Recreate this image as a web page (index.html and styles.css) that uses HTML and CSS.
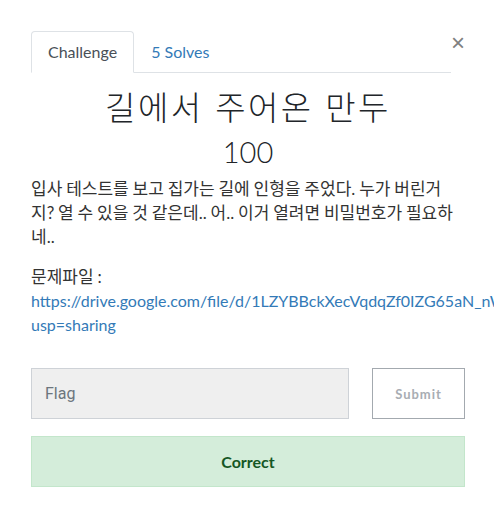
FILE: index.html
```html
<!DOCTYPE html>
<html lang="ko">
<head>
<meta charset="utf-8">
<title>Challenge</title>
<link rel="stylesheet" href="styles.css">
</head>
<body>
<div class="modal">
  <div class="header">
    <ul class="tabs">
      <li class="tab active">Challenge</li>
      <li class="tab"><a href="#">5 Solves</a></li>
    </ul>
    <button class="close" type="button">&times;</button>
  </div>
  <div class="content">
    <h2 class="title">길에서 주어온 만두</h2>
    <h3 class="value">100</h3>
    <div class="desc">
      <p class="ko">입사 테스트를 보고 집가는 길에 인형을 주었다. 누가 버린거<br>지? 열 수 있을 것 같은데.. 어.. 이거 열려면 비밀번호가 필요하<br>네..</p>
      <p><span class="ko">문제파일 :</span><br><a href="#">https://drive.google.com/file/d/1LZYBBckXecVqdqZf0IZG65aN_nWmPz2Q/view?usp=sharing</a></p>
    </div>
    <form class="submit-row">
      <input class="flag" type="text" placeholder="Flag">
      <button class="submit" type="button">Submit</button>
    </form>
    <div class="notice">Correct</div>
  </div>
</div>
</body>
</html>
```

FILE: styles.css
```css
html, body {
  margin: 0;
  padding: 0;
  background: #fff;
  overflow: hidden;
}

body {
  font-family: Lato, "Noto Sans CJK KR", sans-serif;
  color: #212529;
  font-size: 16px;
  line-height: 1.5;
}

.modal {
  width: 494px;
  height: 531px;
  box-sizing: border-box;
  padding: 31px 29px 0 31px;
  overflow: hidden;
}

.header {
  display: flex;
  align-items: flex-start;
}

.tabs {
  flex: 1;
  display: flex;
  list-style: none;
  margin: 0;
  padding: 0;
  border-bottom: 1px solid #dee2e6;
}

.tab {
  padding: 8px 16px;
  border: 1px solid transparent;
  border-top-left-radius: 4px;
  border-top-right-radius: 4px;
  margin-bottom: -1px;
  color: #495057;
}

.tab.active {
  border-color: #dee2e6 #dee2e6 #fff;
  background: #fff;
}

.tab a {
  color: #337ab7;
  text-decoration: none;
}

.close {
  width: 14px;
  padding: 0;
  margin: 0;
  border: 0;
  background: none;
  font-family: "Liberation Sans", sans-serif;
  font-size: 24px;
  font-weight: 400;
  line-height: 24px;
  color: #808080;
  text-align: right;
}

.content {
  padding-top: 15px;
}

.title {
  margin: 0;
  text-align: center;
  font-weight: 300;
  font-size: 33px;
  letter-spacing: 2.5px;
  line-height: 1.2;
  color: #212529;
}

.value {
  margin: 7px 0 0;
  text-align: center;
  font-weight: 300;
  font-size: 29px;
  line-height: 1.2;
  color: #212529;
}

.desc {
  margin-top: 8px;
  color: #333;
  line-height: 24px;
}

.desc p {
  margin: 0 0 16px;
}

.ko {
  font-size: 17px;
  line-height: 24px;
  word-spacing: -0.5px;
}

.desc a {
  color: #337ab7;
  text-decoration: none;
}

.submit-row {
  display: flex;
  gap: 23px;
  margin-top: 31px;
}

.flag {
  flex: 0 0 318px;
  box-sizing: border-box;
  height: 51px;
  padding: 0 13px;
  border: 1px solid #ced2d7;
  background: #efefef;
  font-family: Roboto, "Liberation Sans", sans-serif;
  font-size: 16px;
  color: #495057;
  outline: none;
}

.flag::placeholder {
  color: #6c757d;
}

.submit {
  flex: 1;
  box-sizing: border-box;
  height: 51px;
  border: 1px solid #a3a9af;
  background: #fff;
  font-family: Lato, sans-serif;
  font-size: 13px;
  font-weight: 700;
  letter-spacing: 1px;
  color: #a8adb3;
}

.notice {
  margin-top: 17px;
  height: 51px;
  box-sizing: border-box;
  border: 1px solid #c3e6cb;
  background: #d4edda;
  color: #155724;
  font-weight: 700;
  font-size: 16px;
  display: flex;
  align-items: center;
  justify-content: center;
}
```
